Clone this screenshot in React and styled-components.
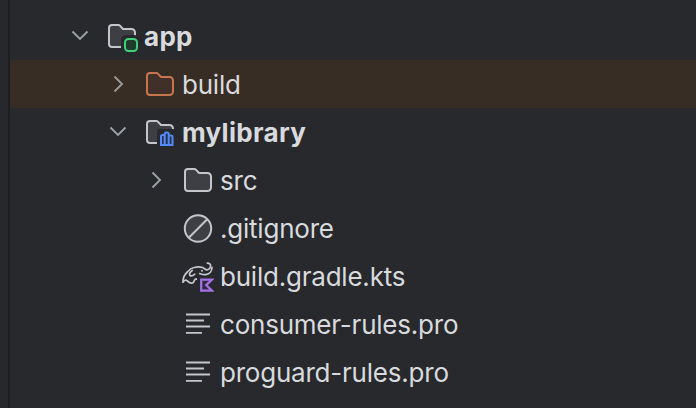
import React from "react";
import styled, { createGlobalStyle } from "styled-components";

const Global = createGlobalStyle`
  html, body { margin: 0; padding: 0; background: #27292c; overflow: hidden; }
  #root { width: 696px; height: 408px; }
`;

const Page = styled.div`
  display: flex;
  width: 696px;
  height: 408px;
  background: #27292c;
  font-family: Inter, "Liberation Sans", sans-serif;
`;
const Gutter = styled.div`
  width: 8px;
  flex: none;
  background: #26282b;
  border-right: 2px solid #1d1e21;
`;
const Tree = styled.div`
  flex: 1;
  min-width: 0;
  padding-top: 12px;
  display: flex;
  flex-direction: column;
`;
const Row = styled.div`
  display: flex;
  align-items: center;
  flex: none;
  height: 48px;
  padding-left: ${p => 54 + p.$level * 38}px;
  background: ${p => (p.$excluded ? "#382d25" : "transparent")};
`;
const Toggle = styled.div`
  width: 32px;
  height: 32px;
  flex: none;
  display: flex;
  align-items: center;
  justify-content: center;
  color: ${p => (p.$hl ? "#9a9896" : "#9da0a8")};
`;
const IconBox = styled.div`
  width: 32px;
  height: 32px;
  flex: none;
  margin-left: 10px;
`;
const Label = styled.span`
  margin: 2px 0 0 6px;
  font-size: 26px;
  line-height: 32px;
  white-space: nowrap;
  color: #d8dade;
  font-weight: ${p => (p.$bold ? 700 : 400)};
  letter-spacing: ${p => (p.$bold ? "0.3px" : "-0.22px")};
`;

const Chevron = ({ open }) => (
  <svg width="32" height="32" viewBox="0 0 32 32" fill="none" stroke="currentColor" strokeWidth="1.9">
    {open ? <path d="M8.5 11.5 L16 19 L23.5 11.5" /> : <path d="M12.5 8.5 L20 16 L12.5 23.5" />}
  </svg>
);

const Folder = ({ stroke = "#c4c6cc", fill = "#3d3f44", badge }) => (
  <svg width="32" height="32" viewBox="0 0 32 32" fill="none">
    <path
      d="M6 5 H12.5 a2 2 0 0 1 1.4 .6 L17 9 H25.5 a3.5 3.5 0 0 1 3.5 3.5 V23.5 a3.5 3.5 0 0 1 -3.5 3.5 H6 a3 3 0 0 1 -3 -3 V8 a3 3 0 0 1 3 -3 Z"
      fill={fill}
      stroke={stroke}
      strokeWidth="2"
    />
    {badge}
  </svg>
);

const ModuleBadge = (
  <>
    <rect x="15" y="15" width="18" height="18" rx="5" fill="#27292c" />
    <rect x="19" y="19" width="12" height="12" rx="3.5" fill="#223a2c" stroke="#3fd27a" strokeWidth="2" />
  </>
);
const LibBadge = (
  <>
    <rect x="13" y="13" width="19" height="19" rx="3" fill="#27292c" />
    <path
      d="M17 29 V20.5 a1.5 1.5 0 0 1 1.5 -1.5 H20.7 V18 a1.5 1.5 0 0 1 1.5 -1.5 h1 a1.5 1.5 0 0 1 1.5 1.5 V19.5 H27 a1.5 1.5 0 0 1 1.5 1.5 V29 Z M20.7 19 V29 M24.7 19.5 V29"
      fill="#24314b"
      stroke="#548af7"
      strokeWidth="2"
    />
  </>
);

const Ignored = () => (
  <svg width="32" height="32" viewBox="0 0 32 32" fill="none" stroke="#c4c6cc" strokeWidth="2">
    <circle cx="16" cy="16.5" r="13.2" fill="#3d3f44" />
    <path d="M6.8 25.7 L25.2 7.3" />
  </svg>
);

const TextFile = () => (
  <svg width="32" height="32" viewBox="0 0 32 32" fill="none" stroke="#c4c6cc" strokeWidth="1.8">
    <path d="M4 6.5 H28 M4 12.5 H22 M4 18.5 H28 M4 24.8 H20" />
  </svg>
);

const GradleKts = () => (
  <svg width="32" height="32" viewBox="0 0 32 32" fill="none">
    <g stroke="#c4c6cc" strokeWidth="1.7" strokeLinecap="round" strokeLinejoin="round">
      <path d="M1 22 C1 17 3 14 5.3 12 C7 10 9 8 12 7.5 C15 6.8 18 6.6 20.5 7.5 C22.5 8.3 23.5 10 25 9.8 C27 9.5 28.6 8 28.6 5.8 C28.6 4 27 3 25.3 3.2" />
      <path d="M30 7.3 C30 11 27.5 14 24 14.6 C21.5 15 19.5 14.2 17.7 13.6" />
      <path d="M1 22 C2.5 20 4 19.6 5.3 20.8 C6.5 22 8.5 23.3 10.5 23 C12 22.6 12 20.2 13 19.6 C14.3 18.8 15.5 19 16.5 18.7" />
      <path d="M10.3 10.5 C8.3 11.8 7 13.6 7.8 15.3 C9.2 16.8 11.3 15.5 12.8 14.2" />
    </g>
    <circle cx="20" cy="10.7" r="1" fill="#c4c6cc" />
    <path d="M15 16 h18 v17 h-18 Z" fill="#27292c" />
    <path d="M19.2 19.6 H30 L24.2 25.1 L30 30.7 H19.2 Z" fill="#302a41" stroke="#a571e6" strokeWidth="2.2" />
  </svg>
);

const items = [
  { level: 0, open: true, icon: <Folder badge={ModuleBadge} />, label: "app", bold: true },
  { level: 1, open: false, icon: <Folder stroke="#c7754f" fill="#41302a" />, label: "build", excluded: true },
  { level: 1, open: true, icon: <Folder badge={LibBadge} />, label: "mylibrary", bold: true },
  { level: 2, open: false, icon: <Folder />, label: "src" },
  { level: 2, icon: <Ignored />, label: ".gitignore" },
  { level: 2, icon: <GradleKts />, label: "build.gradle.kts" },
  { level: 2, icon: <TextFile />, label: "consumer-rules.pro" },
  { level: 2, icon: <TextFile />, label: "proguard-rules.pro" },
];

export default function App() {
  return (
    <Page>
      <Global />
      <Gutter />
      <Tree>
        {items.map(it => (
          <Row key={it.label} $level={it.level} $excluded={it.excluded}>
            <Toggle $hl={it.excluded}>{it.open !== undefined && <Chevron open={it.open} />}</Toggle>
            <IconBox>{it.icon}</IconBox>
            <Label $bold={it.bold}>{it.label}</Label>
          </Row>
        ))}
      </Tree>
    </Page>
  );
}
